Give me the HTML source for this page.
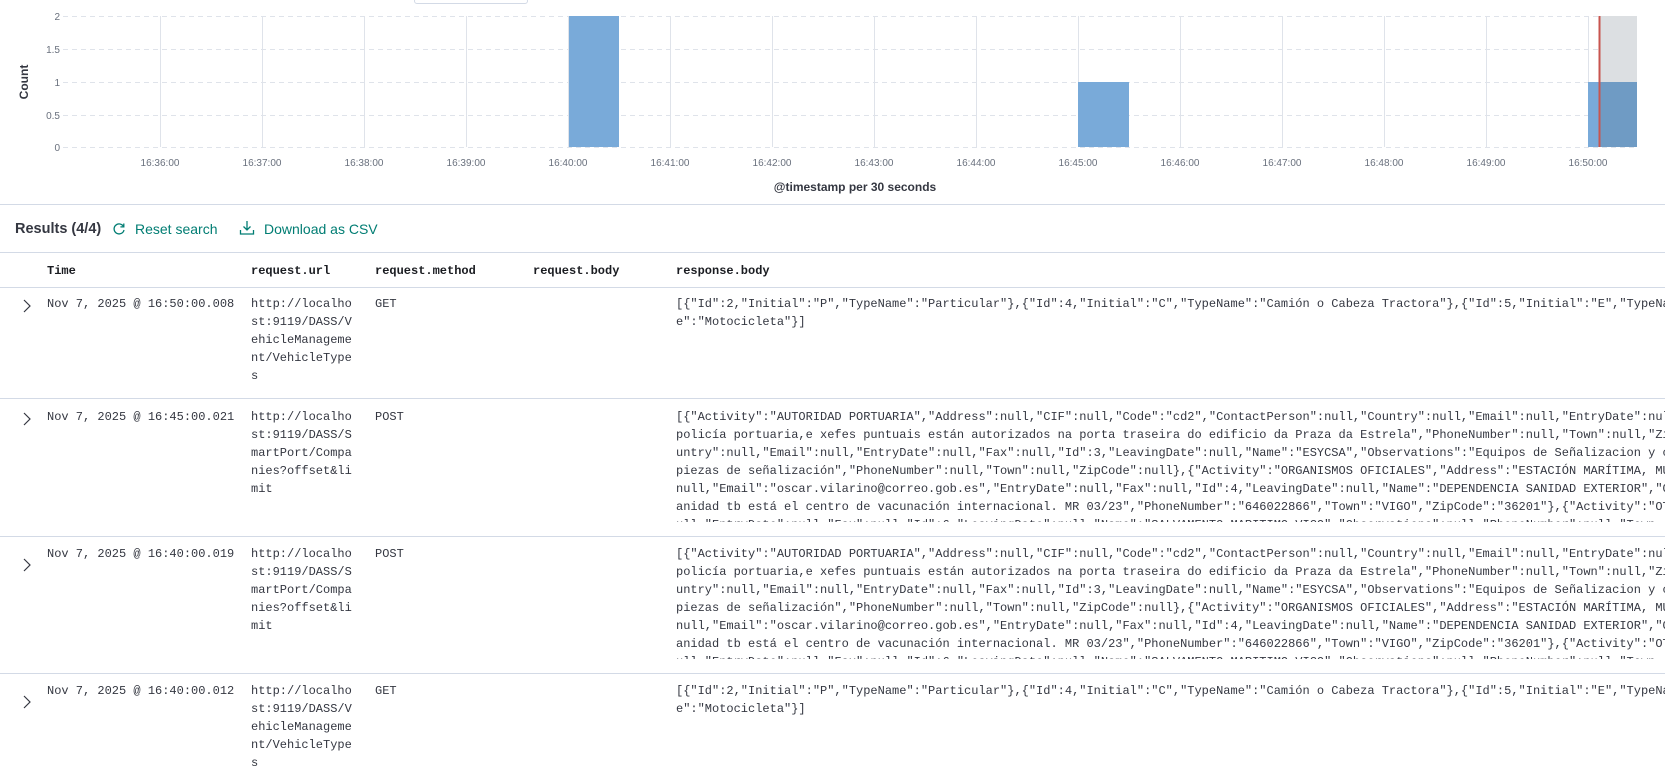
<!DOCTYPE html>
<html><head><meta charset="utf-8">
<style>
*{margin:0;padding:0;box-sizing:border-box}
body{width:1665px;height:783px;overflow:hidden;background:#fff;position:relative;font-family:"Liberation Sans",sans-serif;color:#343741}
.a{position:absolute;white-space:nowrap}
.m{font-family:"Liberation Mono",monospace;font-size:12px;line-height:18px;color:#343741}
.h{font-weight:bold;color:#1a1c21}
.hr{position:absolute;left:0;width:1665px;height:1px;background:#d3dae6}
.chev{position:absolute;left:22px;width:10px;height:14px}
.resp{position:absolute;left:676px;width:989px;overflow:hidden;white-space:nowrap}
</style></head><body>
<div class="a" style="left:414px;top:-2px;width:114px;height:6px;border:1px solid #d3dae6;border-radius:3px;background:#fff"></div>
<svg class="a" style="left:0;top:0" width="1665" height="200">
<g font-family="Liberation Sans" font-size="10" fill="#69707d" text-anchor="end">
<text x="60" y="20">2</text><text x="60" y="53">1.5</text><text x="60" y="86">1</text><text x="60" y="119">0.5</text><text x="60" y="151">0</text>
</g>
<g stroke="#dfe3ea" stroke-width="1">
<line x1="160.5" y1="16" x2="160.5" y2="147"/><line x1="262.5" y1="16" x2="262.5" y2="147"/><line x1="364.5" y1="16" x2="364.5" y2="147"/><line x1="466.5" y1="16" x2="466.5" y2="147"/><line x1="568.5" y1="16" x2="568.5" y2="147"/><line x1="670.5" y1="16" x2="670.5" y2="147"/><line x1="772.5" y1="16" x2="772.5" y2="147"/><line x1="874.5" y1="16" x2="874.5" y2="147"/><line x1="976.5" y1="16" x2="976.5" y2="147"/><line x1="1078.5" y1="16" x2="1078.5" y2="147"/><line x1="1180.5" y1="16" x2="1180.5" y2="147"/><line x1="1282.5" y1="16" x2="1282.5" y2="147"/><line x1="1384.5" y1="16" x2="1384.5" y2="147"/><line x1="1486.5" y1="16" x2="1486.5" y2="147"/><line x1="1588.5" y1="16" x2="1588.5" y2="147"/>
</g>
<g stroke="#dfe3ea" stroke-width="1" stroke-dasharray="5,4">
<line x1="63" y1="16.5" x2="1637" y2="16.5"/><line x1="63" y1="49.5" x2="1637" y2="49.5"/><line x1="63" y1="82.5" x2="1637" y2="82.5"/><line x1="63" y1="115.5" x2="1637" y2="115.5"/><line x1="63" y1="147.5" x2="1637" y2="147.5"/>
</g>
<rect x="1600" y="16" width="37" height="131" fill="#dcdfe2"/>
<rect x="569" y="16" width="50" height="131" fill="#79aad9"/>
<rect x="1078" y="82" width="51" height="65" fill="#79aad9"/>
<rect x="1588" y="82" width="49" height="65" fill="#79aad9"/>
<rect x="1600" y="82" width="37" height="65" fill="#6f9bc4"/>
<rect x="1598.5" y="16" width="2" height="131" fill="#c8554f"/>
<g font-family="Liberation Sans" font-size="10" fill="#69707d" text-anchor="middle">
<text x="160" y="166">16:36:00</text><text x="262" y="166">16:37:00</text><text x="364" y="166">16:38:00</text><text x="466" y="166">16:39:00</text><text x="568" y="166">16:40:00</text><text x="670" y="166">16:41:00</text><text x="772" y="166">16:42:00</text><text x="874" y="166">16:43:00</text><text x="976" y="166">16:44:00</text><text x="1078" y="166">16:45:00</text><text x="1180" y="166">16:46:00</text><text x="1282" y="166">16:47:00</text><text x="1384" y="166">16:48:00</text><text x="1486" y="166">16:49:00</text><text x="1588" y="166">16:50:00</text>
</g>
<text x="855" y="191" font-family="Liberation Sans" font-size="12" font-weight="bold" fill="#343741" text-anchor="middle">@timestamp per 30 seconds</text>
<text transform="translate(28,82) rotate(-90)" font-family="Liberation Sans" font-size="12" font-weight="bold" fill="#343741" text-anchor="middle">Count</text>
</svg>
<div class="hr" style="top:204px"></div>
<div class="a" style="left:15px;top:221px;font-size:14.5px;font-weight:bold;color:#343741">Results (4/4)</div>
<svg class="a" style="left:112px;top:222px" width="14" height="14" viewBox="0 0 14 14"><path d="M11.5 4.5A5 5 0 1 0 12 8" fill="none" stroke="#017d73" stroke-width="1.3"/><path d="M11.8 1.5v3.4H8.4" fill="none" stroke="#017d73" stroke-width="1.3"/></svg>
<div class="a" style="left:135px;top:221px;font-size:14px;color:#017d73">Reset search</div>
<svg class="a" style="left:239px;top:220px" width="16" height="16" viewBox="0 0 16 16"><path d="M8 1v9M4.5 6.5L8 10l3.5-3.5M1.5 10v4h13v-4" fill="none" stroke="#017d73" stroke-width="1.3"/></svg>
<div class="a" style="left:264px;top:221px;font-size:14px;color:#017d73">Download as CSV</div>
<div class="hr" style="top:252px"></div>
<div class="a m h" style="left:47px;top:262px">Time</div>
<div class="a m h" style="left:251px;top:262px">request.url</div>
<div class="a m h" style="left:375px;top:262px">request.method</div>
<div class="a m h" style="left:533px;top:262px">request.body</div>
<div class="a m h" style="left:676px;top:262px">response.body</div>
<div class="hr" style="top:287px"></div>

<svg class="chev" style="top:299px" viewBox="0 0 10 14"><path d="M2 1l6 6-6 6" fill="none" stroke="#343741" stroke-width="1.2"/></svg>
<div class="a m" style="left:47px;top:295px">Nov 7, 2025 @ 16:50:00.008</div>
<div class="a m" style="left:251px;top:295px">http://localho<br>st:9119/DASS/V<br>ehicleManageme<br>nt/VehicleType<br>s</div>
<div class="a m" style="left:375px;top:295px">GET</div>
<div class="resp m" style="top:295px;height:40px">[{"Id":2,"Initial":"P","TypeName":"Particular"},{"Id":4,"Initial":"C","TypeName":"Camión o Cabeza Tractora"},{"Id":5,"Initial":"E","TypeName":<br>e":"Motocicleta"}]</div>
<div class="hr" style="top:398px"></div>

<svg class="chev" style="top:412px" viewBox="0 0 10 14"><path d="M2 1l6 6-6 6" fill="none" stroke="#343741" stroke-width="1.2"/></svg>
<div class="a m" style="left:47px;top:408px">Nov 7, 2025 @ 16:45:00.021</div>
<div class="a m" style="left:251px;top:408px">http://localho<br>st:9119/DASS/S<br>martPort/Compa<br>nies?offset&amp;li<br>mit</div>
<div class="a m" style="left:375px;top:408px">POST</div>
<div class="resp m" style="top:408px;height:114px">[{"Activity":"AUTORIDAD PORTUARIA","Address":null,"CIF":null,"Code":"cd2","ContactPerson":null,"Country":null,"Email":null,"EntryDate":null<br>policía portuaria,e xefes puntuais están autorizados na porta traseira do edificio da Praza da Estrela","PhoneNumber":null,"Town":null,"Zi<br>untry":null,"Email":null,"EntryDate":null,"Fax":null,"Id":3,"LeavingDate":null,"Name":"ESYCSA","Observations":"Equipos de Señalizacion y c<br>piezas de señalización","PhoneNumber":null,"Town":null,"ZipCode":null},{"Activity":"ORGANISMOS OFICIALES","Address":"ESTACIÓN MARÍTIMA, MU<br>null,"Email":"oscar.vilarino@correo.gob.es","EntryDate":null,"Fax":null,"Id":4,"LeavingDate":null,"Name":"DEPENDENCIA SANIDAD EXTERIOR","O<br>anidad tb está el centro de vacunación internacional. MR 03/23","PhoneNumber":"646022866","Town":"VIGO","ZipCode":"36201"},{"Activity":"OT<br>ull,"EntryDate":null,"Fax":null,"Id":6,"LeavingDate":null,"Name":"SALVAMENTO MARITIMO VIGO","Observations":null,"PhoneNumber":null,"Town</div>
<div class="hr" style="top:536px"></div>

<svg class="chev" style="top:558px" viewBox="0 0 10 14"><path d="M2 1l6 6-6 6" fill="none" stroke="#343741" stroke-width="1.2"/></svg>
<div class="a m" style="left:47px;top:545px">Nov 7, 2025 @ 16:40:00.019</div>
<div class="a m" style="left:251px;top:545px">http://localho<br>st:9119/DASS/S<br>martPort/Compa<br>nies?offset&amp;li<br>mit</div>
<div class="a m" style="left:375px;top:545px">POST</div>
<div class="resp m" style="top:545px;height:114px">[{"Activity":"AUTORIDAD PORTUARIA","Address":null,"CIF":null,"Code":"cd2","ContactPerson":null,"Country":null,"Email":null,"EntryDate":null<br>policía portuaria,e xefes puntuais están autorizados na porta traseira do edificio da Praza da Estrela","PhoneNumber":null,"Town":null,"Zi<br>untry":null,"Email":null,"EntryDate":null,"Fax":null,"Id":3,"LeavingDate":null,"Name":"ESYCSA","Observations":"Equipos de Señalizacion y c<br>piezas de señalización","PhoneNumber":null,"Town":null,"ZipCode":null},{"Activity":"ORGANISMOS OFICIALES","Address":"ESTACIÓN MARÍTIMA, MU<br>null,"Email":"oscar.vilarino@correo.gob.es","EntryDate":null,"Fax":null,"Id":4,"LeavingDate":null,"Name":"DEPENDENCIA SANIDAD EXTERIOR","O<br>anidad tb está el centro de vacunación internacional. MR 03/23","PhoneNumber":"646022866","Town":"VIGO","ZipCode":"36201"},{"Activity":"OT<br>ull,"EntryDate":null,"Fax":null,"Id":6,"LeavingDate":null,"Name":"SALVAMENTO MARITIMO VIGO","Observations":null,"PhoneNumber":null,"Town</div>
<div class="hr" style="top:673px"></div>

<svg class="chev" style="top:695px" viewBox="0 0 10 14"><path d="M2 1l6 6-6 6" fill="none" stroke="#343741" stroke-width="1.2"/></svg>
<div class="a m" style="left:47px;top:682px">Nov 7, 2025 @ 16:40:00.012</div>
<div class="a m" style="left:251px;top:682px">http://localho<br>st:9119/DASS/V<br>ehicleManageme<br>nt/VehicleType<br>s</div>
<div class="a m" style="left:375px;top:682px">GET</div>
<div class="resp m" style="top:682px;height:40px">[{"Id":2,"Initial":"P","TypeName":"Particular"},{"Id":4,"Initial":"C","TypeName":"Camión o Cabeza Tractora"},{"Id":5,"Initial":"E","TypeName":<br>e":"Motocicleta"}]</div>
</body></html>
